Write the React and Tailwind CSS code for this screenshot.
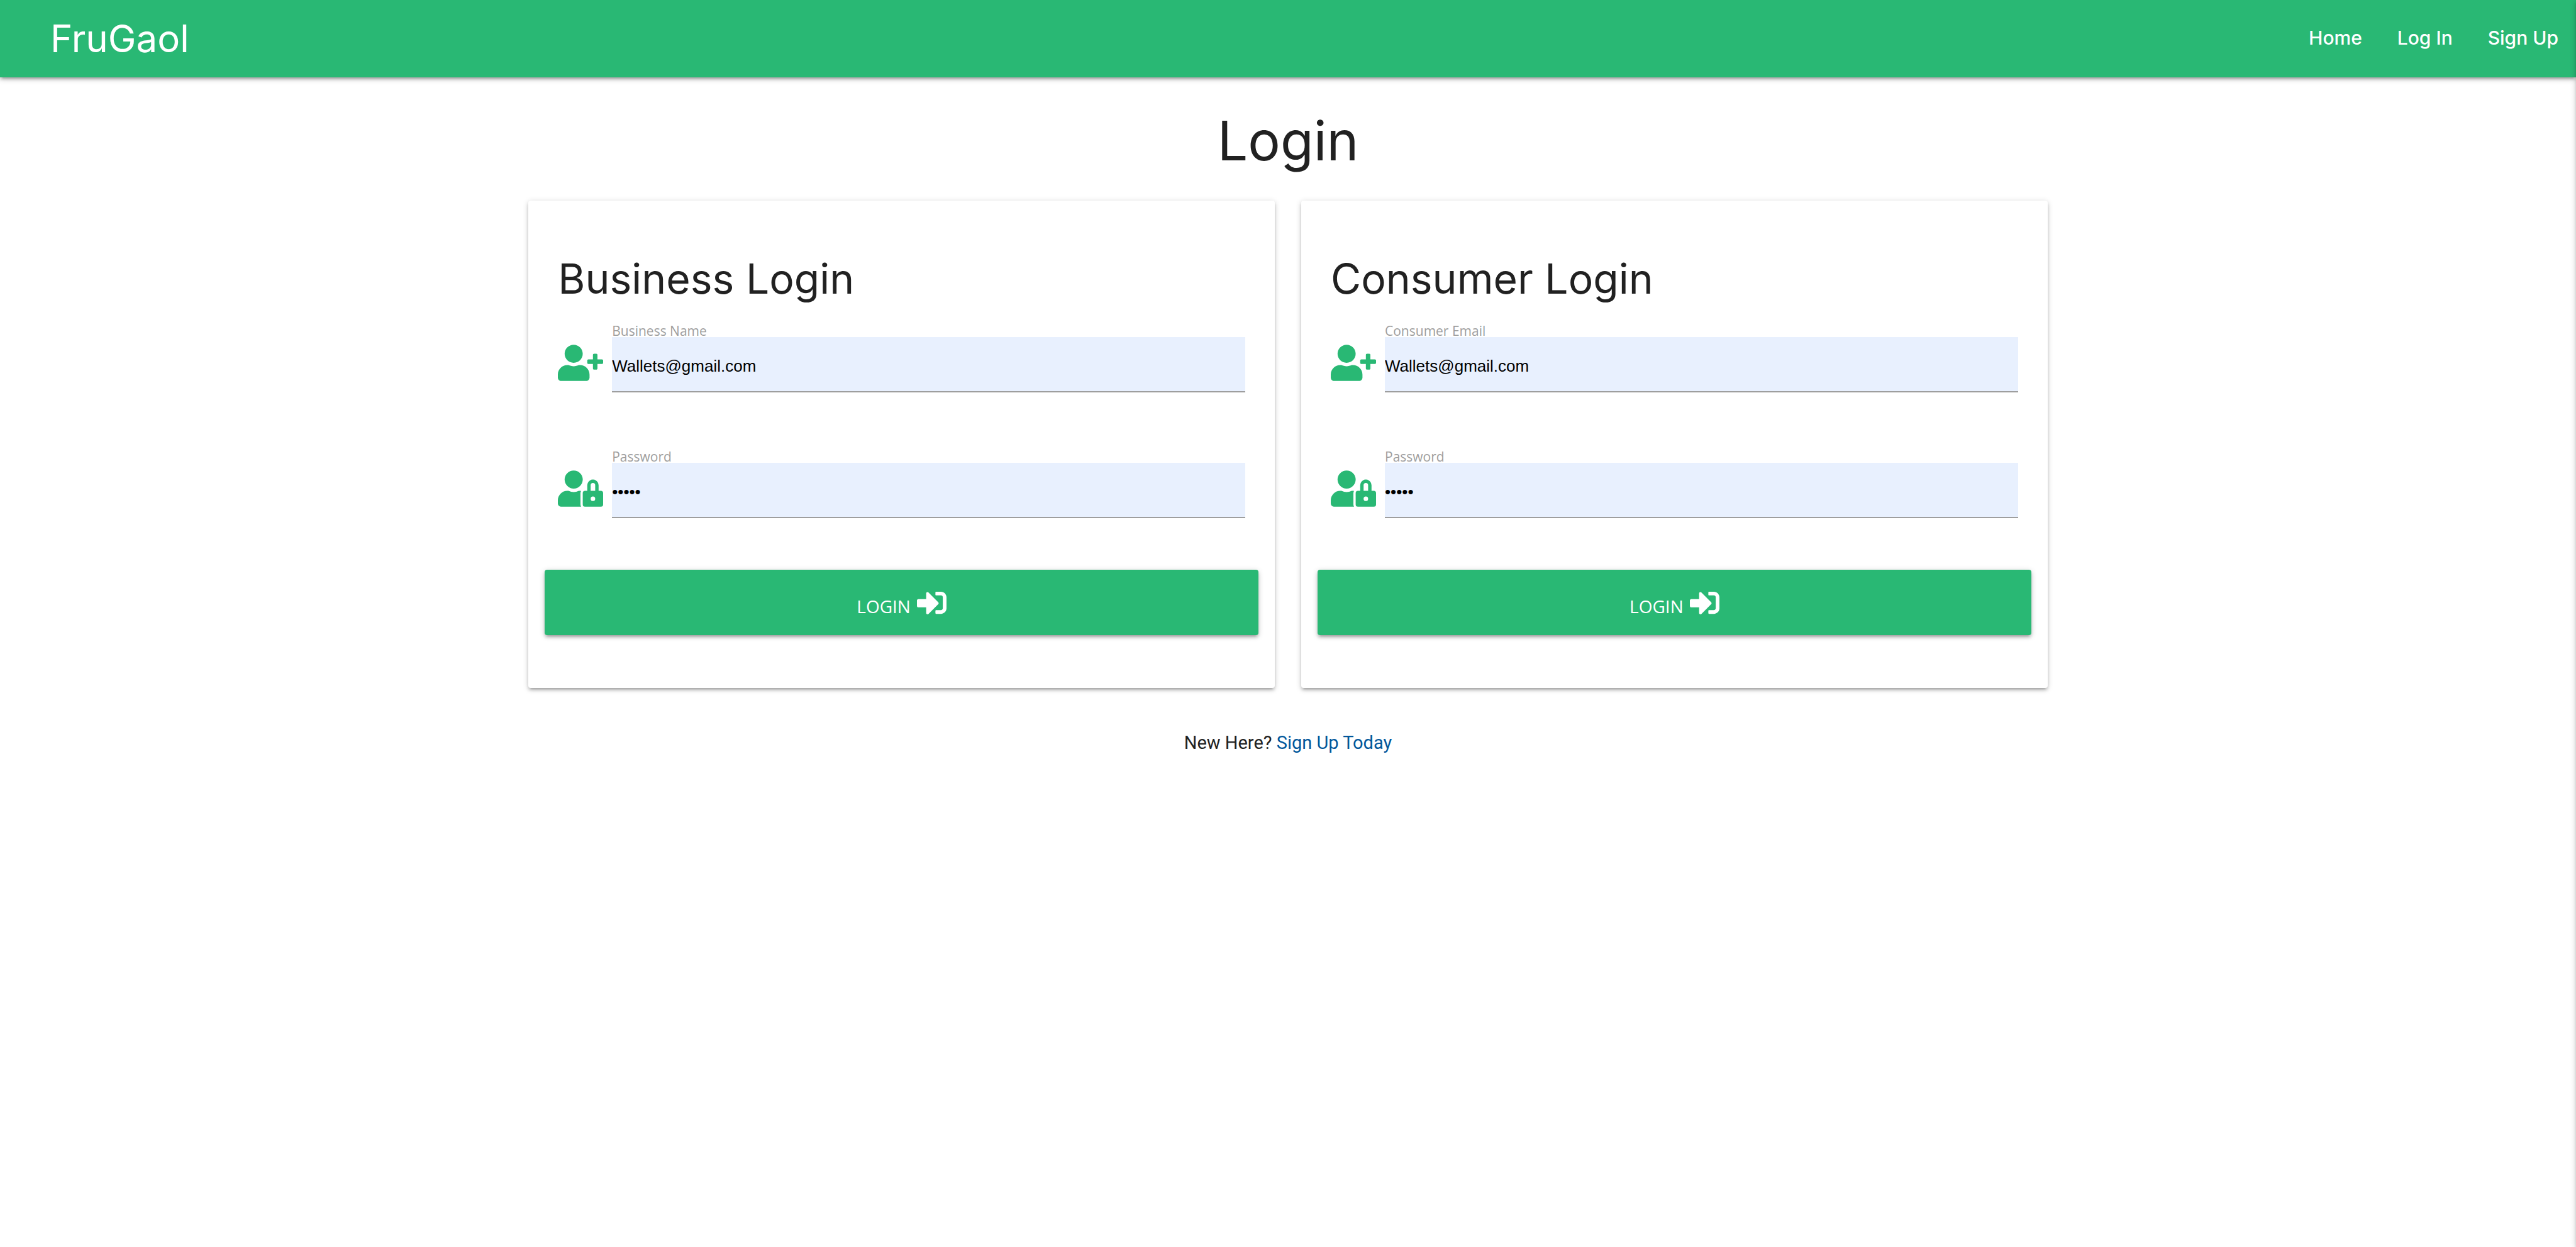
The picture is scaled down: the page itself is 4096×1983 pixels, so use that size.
import { useId } from "react";
import { FaUserPlus, FaUserLock, FaSignInAlt } from "react-icons/fa";

const DEPTH =
  "shadow-[0_4px_4px_0_rgba(0,0,0,0.14),0_6px_2px_-4px_rgba(0,0,0,0.12),0_2px_10px_0_rgba(0,0,0,0.2)]";

function Field({ icon: Icon, label, type, value }) {
  const id = useId();
  return (
    <div className="flex gap-3.5">
      <Icon className="mt-8 h-[58px] w-[72px] shrink-0 text-[#29b874]" aria-hidden="true" />
      <div className="flex min-w-0 flex-1 flex-col">
        <label
          htmlFor={id}
          className="h-5 font-['Open_Sans',sans-serif] text-[21px] leading-5 text-[#9e9e9e]"
        >
          {label}
        </label>
        <input
          id={id}
          type={type}
          defaultValue={value}
          className="h-[88px] w-full border-b-2 border-[#9e9e9e] bg-[#e8f0fe] pt-1.5 font-['Liberation_Sans',Arial,sans-serif] text-[26px] text-black outline-none"
        />
      </div>
    </div>
  );
}

function LoginCard({ title, nameLabel }) {
  return (
    <form
      onSubmit={(e) => e.preventDefault()}
      className={`flex-1 rounded bg-white pt-[89px] pb-[84px] ${DEPTH}`}
    >
      <div className="px-[47px]">
        <h2 className="mb-[38px] text-[66px] leading-[70px]">{title}</h2>
        <div className="flex flex-col gap-[92px]">
          <Field icon={FaUserPlus} label={nameLabel} type="text" value="Wallets@gmail.com" />
          <Field icon={FaUserLock} label="Password" type="password" value="abcde" />
        </div>
      </div>
      <div className="mt-[82px] px-[26px]">
        <button
          type="submit"
          className={`flex h-[104px] w-full items-center justify-center gap-2.5 rounded bg-[#29b874] text-white ${DEPTH}`}
        >
          <span className="pt-3 font-['Open_Sans',sans-serif] text-[28px] leading-9">LOGIN</span>
          <FaSignInAlt className="size-[47px]" aria-hidden="true" />
        </button>
      </div>
    </form>
  );
}

export default function App() {
  return (
    <div className="min-h-screen overflow-x-hidden bg-white font-[Inter,sans-serif] text-[#212121]">
      <header
        className={`flex h-[123px] items-center justify-between bg-[#29b874] pr-7 pb-0.5 pl-20 text-white ${DEPTH}`}
      >
        <a href="#" className="text-[60px] leading-none">
          FruGaol
        </a>
        <nav className="flex gap-14 text-[30px] font-medium">
          <a href="#">Home</a>
          <a href="#">Log In</a>
          <a href="#">Sign Up</a>
        </nav>
      </header>

      <main className="mx-auto w-3/5 px-[21px] pt-[56px]">
        <h1 className="mb-[50px] text-center text-[86px] leading-[90px]">Login</h1>
        <div className="flex gap-[42px]">
          <LoginCard title="Business Login" nameLabel="Business Name" />
          <LoginCard title="Consumer Login" nameLabel="Consumer Email" />
        </div>
        <p className="mt-[65px] text-center font-[Roboto,sans-serif] text-[29px] leading-[44px]">
          New Here?{" "}
          <a href="#" className="text-[#01579b]">
            Sign Up Today
          </a>
        </p>
      </main>

      <aside className={`fixed inset-y-0 left-full w-[288px] bg-white ${DEPTH}`} aria-hidden="true" />
    </div>
  );
}
